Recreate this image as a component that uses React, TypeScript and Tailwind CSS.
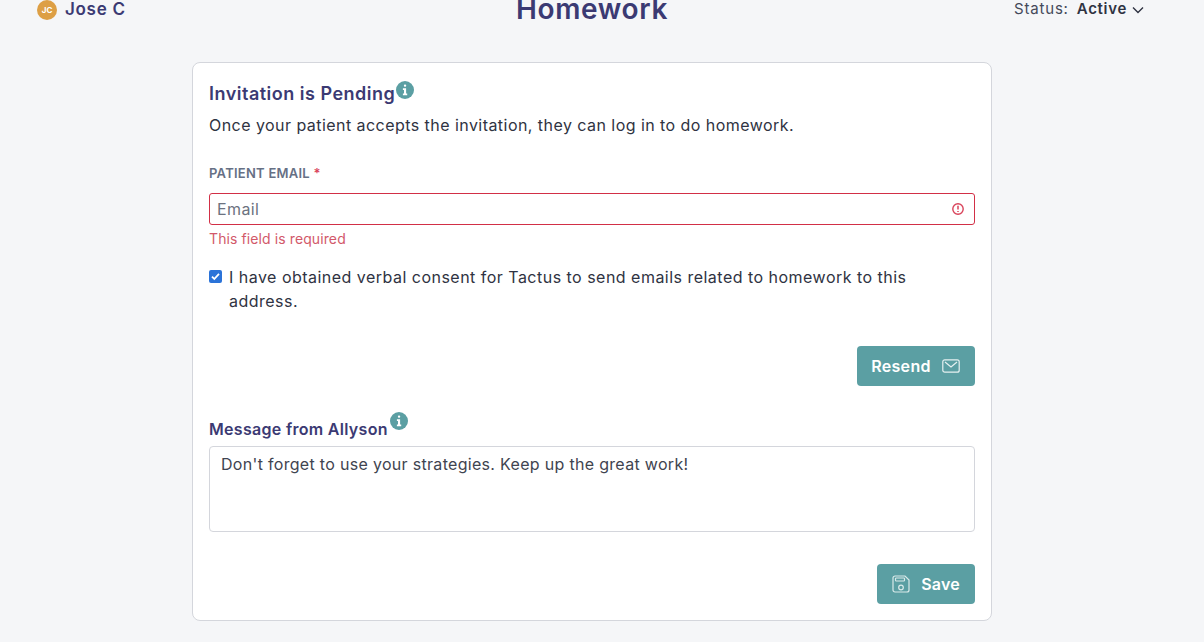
import React from "react";

function Info({ size = 18 }: { size?: number }) {
  return (
    <svg width={size} height={size} viewBox="0 0 18 18" className="shrink-0">
      <circle cx="9" cy="9" r="9" fill="#5b9fa3" />
      <rect x="7.9" y="3.4" width="2.3" height="2.3" rx="1" fill="#fff" />
      <path d="M6.9 7.3h3.2v5.3h1.1v1.6H6.9v-1.6h1.1V8.9H6.9z" fill="#fff" />
    </svg>
  );
}

export default function App() {
  return (
    <div className="h-[642px] w-[1204px] overflow-hidden bg-[#f5f6f8] font-['Inter','Open_Sans',sans-serif] text-[#2f3342]">
      <header className="-mt-[9px] flex h-[37px] items-center justify-between pl-[37px] pr-[60px]">
        <div className="flex w-[300px] items-center gap-2">
          <span className="flex h-5 w-5 items-center justify-center rounded-full bg-[#dd9f45] text-[8px] font-bold text-white">JC</span>
          <span className="text-[17px] font-semibold tracking-[0.7px] text-[#3b3a73]">Jose C</span>
        </div>
        <h1 className="ml-[3px] text-[28px] font-semibold leading-[37px] tracking-[0.65px] text-[#3b3a73]">Homework</h1>
        <div className="flex w-[300px] items-center justify-end gap-2 text-[15px]">
          <span className="tracking-[0.8px] text-[#44495a]">Status:</span>
          <span className="flex items-center gap-[5px] font-semibold tracking-[0.7px]">
            Active
            <svg width="12" height="8" viewBox="0 0 12 8" fill="none" stroke="#2f3342" strokeWidth="1.4"><path d="M1 1.5l5 5 5-5" /></svg>
          </span>
        </div>
      </header>

      <main className="ml-[192px] mt-[34px] h-[559px] w-[800px] rounded-[8px] border border-[#d4d6dc] bg-white px-4 pt-4">
        <div className="flex items-start">
          <h2 className="mt-[1px] text-[18px] font-semibold leading-[28px] tracking-[0.5px] text-[#3b3a73]">Invitation is Pending</h2>
          <span className="mt-[2px] ml-[1px]"><Info /></span>
        </div>
        <p className="mt-[5px] text-[16px] leading-[24px] tracking-[0.45px]">Once your patient accepts the invitation, they can log in to do homework.</p>

        <div className="mt-[26px] text-[13px] font-semibold leading-[20px] tracking-[0.25px] text-[#667085]">
          PATIENT EMAIL <span className="text-[#d9435a]">*</span>
        </div>
        <div className="mt-[10px] flex h-8 items-center justify-between rounded-[3px] border border-[#d22f46] pl-[7px] pr-2">
          <span className="text-[16px] tracking-[0.4px] text-[#6c7280]">Email</span>
          <svg width="14" height="14" viewBox="0 0 14 14" fill="none" className="mr-[1px]">
            <circle cx="7" cy="7" r="5.2" stroke="#d9435a" strokeWidth="1.4" />
            <path d="M7 3.8v3.8M7 9v1.1" stroke="#d9435a" strokeWidth="1.5" />
          </svg>
        </div>
        <p className="mt-[4px] text-[14px] leading-[20px] tracking-[0.1px] text-[#d2596a]">This field is required</p>

        <div className="mt-[16px] flex items-start gap-[7px]">
          <span className="mt-[5px] flex h-[13px] w-[13px] shrink-0 items-center justify-center rounded-[2px] bg-[#2b73d8]">
            <svg width="9" height="9" viewBox="0 0 9 9" fill="none" stroke="#fff" strokeWidth="1.8"><path d="M1 4.7l2.3 2.3L8 1.8" /></svg>
          </span>
          <p className="text-[16px] leading-[24px] tracking-[0.48px]">I have obtained verbal consent for Tactus to send emails related to homework to this<br />address.</p>
        </div>

        <div className="mt-[33px] flex justify-end">
          <button className="flex h-10 w-[118px] items-center justify-center gap-[11px] rounded-[4px] bg-[#5b9fa3] pr-[1px] text-[16px] font-semibold tracking-[0.3px] text-white">
            Resend
            <svg width="18" height="14" viewBox="0 0 18 14" fill="none" stroke="#e6f1f1" strokeWidth="1.2">
              <rect x="0.8" y="0.8" width="16.4" height="12.4" rx="2" />
              <path d="M3 3l6 5 6-5" />
            </svg>
          </button>
        </div>

        <div className="mt-[26px] flex items-start">
          <h3 className="mt-[7px] text-[16px] font-semibold leading-[20px] tracking-[0.3px] text-[#3b3a73]">Message from Allyson</h3>
          <span className="ml-[2px]"><Info /></span>
        </div>
        <div className="mt-[7px] h-[86px] rounded-[4px] border border-[#d4d6dc] px-[11px] py-[5px] text-[16px] leading-[24px] tracking-[0.31px] text-[#3f4450]">
          Don't forget to use your strategies. Keep up the great work!
        </div>

        <div className="mt-[32px] flex justify-end">
          <button className="flex h-10 w-[98px] items-center justify-center gap-[11px] rounded-[4px] bg-[#5b9fa3] text-[16px] font-semibold tracking-[0.2px] text-white">
            <svg width="18" height="18" viewBox="0 0 18 18" fill="none" stroke="#d9eaea" strokeWidth="1.2">
              <path d="M3 1h10l4 4v10a2 2 0 0 1-2 2H3a2 2 0 0 1-2-2V3a2 2 0 0 1 2-2z" />
              <rect x="3.5" y="3" width="9" height="3" rx="0.8" />
              <circle cx="9" cy="12.5" r="2.3" />
            </svg>
            Save
          </button>
        </div>
      </main>
    </div>
  );
}
